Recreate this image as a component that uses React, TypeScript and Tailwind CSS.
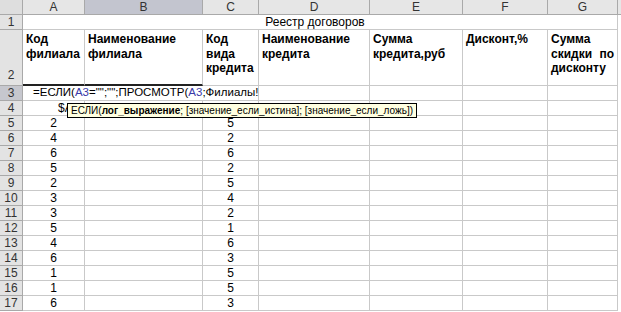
import React from 'react';

// ширины столбцов: заголовок строк + A..G
const cols = ['A', 'B', 'C', 'D', 'E', 'F', 'G'];

const dataRows: [string, string][] = [
  ['2', '5'],
  ['4', '2'],
  ['6', '6'],
  ['5', '2'],
  ['2', '5'],
  ['3', '4'],
  ['3', '2'],
  ['5', '1'],
  ['4', '6'],
  ['6', '3'],
  ['1', '5'],
  ['1', '5'],
  ['6', '3'],
];

const cell = 'border-r border-b border-[#c9c9c9] bg-white';
const rowHead =
  'flex items-center justify-center border-r border-b border-[#a9a9a9] bg-[#e3e3e3] text-[12px] text-[#333]';
const headText = 'px-[3px] pt-[2px] text-[12px] font-bold leading-[14.5px]';

const App: React.FC = () => {
  return (
    <div
      className="relative w-[621px] h-[312px] overflow-hidden bg-white text-black"
      style={{ fontFamily: '"Liberation Sans", Arial, sans-serif' }}
    >
      <div className="grid grid-cols-[23px_62px_118px_56px_111px_93px_85px_70px_3px] grid-rows-[15px_15px_56px_15px_15px_repeat(13,15px)]">
        {/* шапка столбцов */}
        <div className="border-r border-b border-[#a9a9a9] bg-[#dedede]" />
        {cols.map(c => (
          <div
            key={c}
            className={`flex items-center justify-center border-r border-b border-[#a9a9a9] text-[12px] text-[#333] ${
              c === 'B' ? 'bg-[#c3c5cf]' : 'bg-[#e6e6e6]'
            }`}
          >
            {c}
          </div>
        ))}
        <div className="bg-[#e6e6e6] border-b border-[#a9a9a9]" />

        {/* строка 1 */}
        <div className={rowHead}>1</div>
        <div className={`col-span-7 flex items-center justify-center pr-[10px] text-[12px] ${cell}`}>
          Реестр договоров
        </div>
        <div />

        {/* строка 2 — заголовки реестра */}
        <div className={`${rowHead} !items-end pb-[1px]`}>2</div>
        <div className={`border-r border-b-2 border-b-[#222] border-r-[#c9c9c9] ${headText}`}>
          Код филиала
        </div>
        <div className={`border-r border-b-2 border-b-[#222] border-r-[#c9c9c9] ${headText}`}>
          Наименование филиала
        </div>
        <div className={`${cell} ${headText}`}>Код вида кредита</div>
        <div className={`${cell} ${headText}`}>Наименование кредита</div>
        <div className={`${cell} ${headText}`}>Сумма кредита,руб</div>
        <div className={`${cell} ${headText}`}>Дисконт,%</div>
        <div className={`${cell} ${headText} text-justify`}>Сумма скидки по дисконту</div>
        <div />

        {/* строка 3 — ввод формулы */}
        <div className={`${rowHead} !bg-[#c6c7ce]`}>3</div>
        <div className={`col-span-3 flex items-center whitespace-nowrap pl-[10px] text-[11.5px] ${cell}`}>
          =ЕСЛИ(<span className="text-[#3a3aa8]">A3</span>="";"";ПРОСМОТР(<span className="text-[#3a3aa8]">A3</span>;Филиалы!
        </div>
        <div className={cell} />
        <div className={cell} />
        <div className={cell} />
        <div className={cell} />
        <div />

        {/* строка 4 */}
        <div className={rowHead}>4</div>
        <div className={`flex items-center pl-[35px] text-[12px] ${cell}`}>$A</div>
        <div className={cell} />
        <div className={cell} />
        <div className={cell} />
        <div className={cell} />
        <div className={cell} />
        <div className={cell} />
        <div />

        {dataRows.map(([a, c], i) => (
          <React.Fragment key={i}>
            <div className={rowHead}>{i + 5}</div>
            <div className={`flex items-center justify-center text-[12px] ${cell}`}>{a}</div>
            <div className={cell} />
            <div className={`flex items-center justify-center text-[12px] ${cell}`}>{c}</div>
            <div className={cell} />
            <div className={cell} />
            <div className={cell} />
            <div className={cell} />
            <div />
          </React.Fragment>
        ))}
      </div>

      {/* подсказка по аргументам функции */}
      <div className="absolute left-[67px] top-[103px] flex h-[15px] w-[350px] items-center whitespace-nowrap border border-black bg-[#ffffe1] pl-[3px] text-[10px] leading-none">
        ЕСЛИ(<b>лог_выражение</b>; [значение_если_истина]; [значение_если_ложь])
      </div>
    </div>
  );
};

export default App;
